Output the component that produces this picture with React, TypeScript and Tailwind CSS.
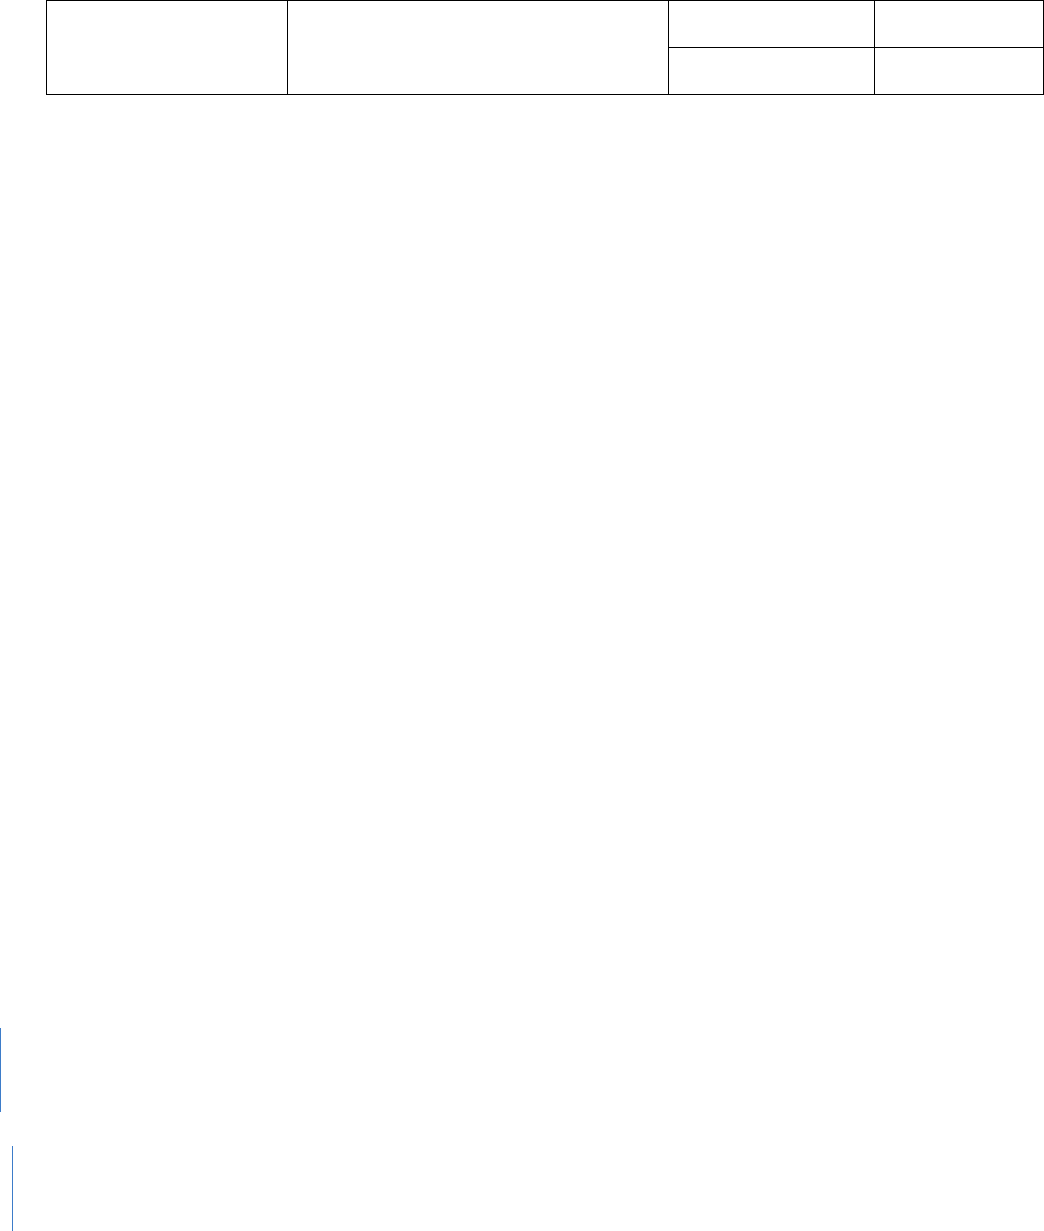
// Document page: empty header table with change bars in the margin
export default function App() {
  return (
    <div className="relative min-h-[1231px] bg-white overflow-hidden font-['Liberation_Sans',sans-serif]">
      <div className="pl-[46px]">
        <table className="border-collapse table-fixed w-[997px] border border-black">
          <colgroup>
            <col className="w-[241px]" />
            <col className="w-[381px]" />
            <col className="w-[206px]" />
            <col className="w-[169px]" />
          </colgroup>
          <tbody>
            <tr className="h-[47px]">
              <td rowSpan={2} className="border border-black p-0"></td>
              <td rowSpan={2} className="border border-black p-0"></td>
              <td className="border border-black p-0"></td>
              <td className="border border-black p-0"></td>
            </tr>
            <tr className="h-[47px]">
              <td className="border border-black p-0"></td>
              <td className="border border-black p-0"></td>
            </tr>
          </tbody>
        </table>
      </div>

      {/* change bars */}
      <div className="mt-[933px] h-[84px] border-l border-[#3d7cc9]"></div>
      <div className="mt-[34px] ml-[12px] h-[90px] border-l border-[#3d7cc9]"></div>
    </div>
  );
}
